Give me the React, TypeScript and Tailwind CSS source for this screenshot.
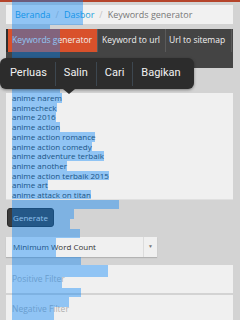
import React from "react";

const words: string[] = [
    "anime narem",
    "animecheck",
    "anime 2016",
    "anime action",
    "anime action romance",
    "anime action comedy",
    "anime adventure terbaik",
    "anime another",
    "anime action terbaik 2015",
    "anime art",
    "anime attack on titan",
];

// selection highlight outside the textarea: [top, height, left, width]
const marks: number[][] = [
    [0, 29, 12, 38],
    [0, 25, 50, 33],
    [29, 29, 12, 48],
    [89, 4, 12, 48],
    [200, 9, 12, 107],
    [209, 10, 12, 62],
    [219, 10, 12, 58],
    [229, 9, 12, 68],
    [238, 19, 12, 44],
    [257, 8, 12, 69],
    [265, 12, 12, 96],
    [277, 11, 12, 50],
    [288, 9, 12, 69],
    [297, 10, 12, 57],
    [307, 13, 12, 42],
];

const App: React.FC = () => {
    return (
        <div className="relative w-[240px] h-[320px] overflow-hidden bg-[#d3d3d3] font-['Open_Sans',sans-serif]">
            <div className="h-[2px] bg-[#b5442b]" />
            <div className="px-[6px] pr-[7px]">
                <div className="mt-[3px] h-[19px] bg-[#f1f1f1] flex items-center pl-[9px] text-[9px] gap-[5px]">
                    <span className="text-[#1fa0dc]">Beranda</span>
                    <span className="text-[#c4c4c4]">/</span>
                    <span className="text-[#1fa0dc]">Dasbor</span>
                    <span className="text-[#c4c4c4]">/</span>
                    <span className="text-[#777]">Keywords generator</span>
                </div>

                <div className="mt-[5px] h-[39px] bg-[#444444]">
                    <div className="flex h-[23px] text-[8.5px] text-[#f2f2f2]">
                        <div className="w-[2px] bg-[#2e2e2e]" />
                        <div className="w-[89px] bg-[#d9512b] flex items-center pl-[4px]">Keywords generator</div>
                        <div className="w-px bg-[#5a5a5a]" />
                        <div className="w-[67px] flex items-center pl-[4px]">Keyword to url</div>
                        <div className="w-px bg-[#5a5a5a]" />
                        <div className="w-[65px] flex items-center pl-[3px]">Url to sitemap</div>
                        <div className="w-px bg-[#5a5a5a]" />
                    </div>
                </div>

                <div className="mt-[25px] h-[107px] bg-[#f0f0f0] border-b border-[#e0e0e0] pl-[6px] overflow-hidden">
                    {words.map(w => (
                        <div key={w} className="relative w-fit text-[8px] leading-[9.7px] text-[#333]">
                            {w}
                            <span className="absolute inset-0 bg-[#0082fa66]" />
                        </div>
                    ))}
                </div>

                <div className="mt-[8px] ml-[1px] w-[47px] h-[19px] rounded-[3px] bg-[#3c3c3c] border border-[#2a2a2a] flex items-center justify-center text-[8px] text-[#e6e6e6]">
                    Generate
                </div>

                <div className="mt-[10px] w-[151px] h-[20px] flex bg-[#f0f0f0] shadow-[0_1px_1px_rgba(0,0,0,0.15)]">
                    <div className="flex-1 flex items-center pl-[7px] text-[8px] text-[#333]">Minimum Word Count</div>
                    <div className="w-[14px] border-l border-[#dcdcdc] flex items-center justify-center text-[5px] text-[#777]">▼</div>
                </div>

                <div className="mt-[8px] h-[28px] bg-[#f0f0f0] flex items-center pl-[6px] text-[8.5px] text-[#b0b0b0]">
                    Positive Filter
                </div>
                <div className="mt-[2px] h-[28px] bg-[#f0f0f0] flex items-center pl-[6px] text-[8.5px] text-[#b0b0b0]">
                    Negative Filter
                </div>
            </div>

            <div className="absolute inset-0 z-10 pointer-events-none">
                {marks.map(([t, h, l, w]) => (
                    <div key={`${t}-${l}`} className="absolute bg-[#0082fa66]" style={{ top: t, height: h, left: l, width: w }} />
                ))}
            </div>

            <div className="absolute left-0 top-[58px] z-20 w-[194px] h-[31px] rounded-[6px] bg-[#2c2c2c] shadow-[0_1px_3px_rgba(0,0,0,0.4)] flex items-center text-[11px] text-[#f2f2f2] font-['Roboto',sans-serif]">
                <span className="pl-[10px] pr-[8px]">Perluas</span>
                <span className="w-px h-[24px] bg-[#3d4750]" />
                <span className="px-[8px]">Salin</span>
                <span className="w-px h-[24px] bg-[#3d4750]" />
                <span className="px-[8px]">Cari</span>
                <span className="w-px h-[24px] bg-[#3d4750]" />
                <span className="px-[8px]">Bagikan</span>
            </div>
            <div className="absolute left-[63px] top-[89px] z-20 w-0 h-0 border-l-[6px] border-r-[6px] border-t-[5px] border-l-transparent border-r-transparent border-t-[#2c2c2c]" />
        </div>
    );
};

export default App;
